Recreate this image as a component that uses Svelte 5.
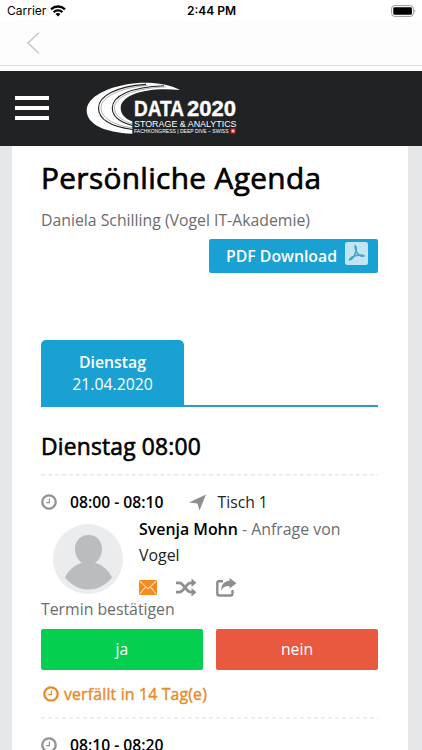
<script>
  const person = {
    name: 'Svenja Mohn',
    request: 'Anfrage von',
    company: 'Vogel'
  };

  const day = { name: 'Dienstag', date: '21.04.2020' };

  let answer = $state(null);
</script>

{#snippet clock()}
  <svg class="clock" viewBox="0 0 16 16">
    <circle cx="8" cy="8" r="6.7" fill="none" stroke="currentColor" stroke-width="2.3" />
    <path d="M8.4 4.4V8.6H5.2" fill="none" stroke="currentColor" stroke-width="1.2" />
  </svg>
{/snippet}

<div class="screen">
  <div class="status">
    <div class="carrier">
      <span>Carrier</span>
      <svg width="16" height="12" viewBox="0 0 16 12">
        <g fill="none" stroke="#000" stroke-width="2.3">
          <path d="M1 4.3A10.2 10.2 0 0 1 15 4.3" />
          <path d="M3.6 7.2A6.3 6.3 0 0 1 12.4 7.2" />
        </g>
        <path d="M8 11.6L5.5 9.1A3.6 3.6 0 0 1 10.5 9.1Z" />
      </svg>
    </div>
    <div class="time">2:44 PM</div>
    <div class="power">
      <svg width="25" height="12" viewBox="0 0 25 12">
        <rect x="0.6" y="0.6" width="21.8" height="10.8" rx="3" fill="#fff" stroke="#999" />
        <rect x="2.3" y="2.2" width="18.6" height="7.6" rx="1.3" />
        <path d="M23.6 4.2Q25.2 6 23.6 7.8Z" fill="#888" />
      </svg>
    </div>
  </div>

  <nav>
    <svg width="14" height="24" viewBox="0 0 14 24">
      <path d="M13 1.500L2 12L13 22.500" fill="none" stroke="#c8c8c8" stroke-width="1.5" />
    </svg>
  </nav>

  <header>
    <button class="burger" aria-label="Menu">
      <i></i><i></i><i></i>
    </button>
    <svg class="logo" width="152" height="54" viewBox="0 0 152 54">
      <path
        fill="#fff"
        d="M94 8C80 0.500 58 -0.800 40 2.500C16 7 0.700 17 0.700 28.500C0.700 42 18 50.500 46.300 51.700V39.500C38.500 36.500 34.700 31.500 34.700 26C34.700 13 60 4.500 94 8Z"
      />
      <g fill="none" stroke="#202224" stroke-width="1.1">
        <path d="M60 2.400C30 4.500 12.500 14 12.500 26C12.500 37 25 44.500 46.500 47.500" />
        <path d="M78 3.800C45 5 26.300 14 26.300 26C26.300 34 33 40 46.500 43.500" />
      </g>
      <g fill="none" stroke="#202224" stroke-width="0.5" opacity="0.7">
        <path d="M62 3.400C34 5.500 15 15 15 26C15 35.500 27 43 46.500 46" />
        <path d="M80 4.800C48 6 28.500 15 28.500 26C28.500 33 35 38.500 46.500 42" />
      </g>
      <g fill="#fff" font-family="'Liberation Sans', Arial, sans-serif">
        <g font-size="21.5" font-weight="700" stroke="#fff" stroke-width="0.4">
          <text x="48" y="34" textLength="50" lengthAdjust="spacingAndGlyphs">DATA</text>
          <text x="101" y="34" textLength="49" lengthAdjust="spacingAndGlyphs">2020</text>
        </g>
        <text x="48" y="44.500" font-size="8.300" textLength="102.500" lengthAdjust="spacingAndGlyphs">STORAGE &amp; ANALYTICS</text>
        <text x="48" y="51" font-size="5" textLength="94.500" lengthAdjust="spacingAndGlyphs">FACHKONGRESS | DEEP DIVE – SWISS</text>
      </g>
      <rect x="144.500" y="46.500" width="5" height="5" fill="#d8232e" />
      <path d="M147 47.500v3M145.500 49h3" stroke="#fff" stroke-width="1" />
    </svg>
  </header>

  <main>
    <h1>Persönliche Agenda</h1>
    <p class="owner">Daniela Schilling (Vogel IT-Akademie)</p>

    <button class="pdf">
      <span>PDF Download</span>
      <svg width="23" height="23" viewBox="0 0 23 23">
        <rect width="23" height="23" rx="2.5" fill="#c3e5f3" />
        <path
          d="M10.200 4C11.500 5 11.300 8.500 10.200 11.500C9 15 6.500 17.500 4.600 17.800C5.200 15.500 9 14 12 13.500C15 13 18 12.800 19 13.800C17 15.200 14 13.200 12.400 11.200C10.800 9 10 6 10.200 4Z"
          fill="none" stroke="#3fa6ca" stroke-width="1.6"
        />
      </svg>
    </button>

    <div class="tabs">
      <div class="tab">
        <b>{day.name}</b>
        <span>{day.date}</span>
      </div>
    </div>

    <h2>{day.name} 08:00</h2>

    <section>
      <div class="slot">
        {@render clock()}
        <b>08:00 - 08:10</b>
        <svg class="arrow" width="17" height="17" viewBox="0 0 17 17">
          <path d="M17 0.500L10.500 16.500L8.500 9.500L0 8.500Z" fill="#8c8e90" />
        </svg>
        <span class="place">Tisch 1</span>
      </div>

      <div class="person">
        <svg class="avatar" width="70" height="70" viewBox="0 0 70 70">
          <circle cx="35" cy="35" r="35" fill="#ebecee" />
          <path
            d="M35.5 11C43.5 11 49 17 49 25C49 31 46 36 42 39C49 40.5 55.5 46 59 53.5C53 61 45 65.5 35.500 65.500C26 65.500 18 61 12 53.500C15.500 46 22 40.500 29 39C25 36 22 31 22 25C22 17 27.500 11 35.500 11Z"
            fill="#bbbcbe"
          />
        </svg>
        <div class="info">
          <div class="line"><b>{person.name}</b> - {person.request}</div>
          <div class="line dark">{person.company}</div>
          <div class="actions">
            <svg width="18" height="15" viewBox="0 0 18 15">
              <rect width="18" height="15" rx="1.2" fill="#f78a1d" />
              <path d="M0.8 1.2L9 8.8L17.200 1.200M0.800 14L6.600 7M17.200 14L11.400 7" fill="none" stroke="#ffe3c4" stroke-width="1.1" />
            </svg>
            <svg width="21" height="19" viewBox="0 0 21 19">
              <g fill="none" stroke="#8c8e90" stroke-width="2.8">
                <path d="M0 4.800H3C8.500 4.800 9.500 14.200 15 14.200H16" />
                <path d="M0 14.200H3C8.500 14.200 9.500 4.800 15 4.800H16" />
              </g>
              <path d="M15.500 0.500L20.500 4.800L15.500 9ZM15.500 10L20.500 14.200L15.500 18.500Z" fill="#8c8e90" />
            </svg>
            <svg width="21" height="19" viewBox="0 0 21 19">
              <path d="M7 3.200H3Q1.300 3.200 1.300 5V15.500Q1.300 17.500 3.200 17.500H14.500Q16.500 17.500 16.500 15.500V12" fill="none" stroke="#8c8e90" stroke-width="2.400" />
              <path d="M13.500 0L20.500 5.300L13.500 10.600V7.900C9.500 7.700 7 9 5.200 12.300C5.200 6.800 8 3.200 13.500 2.800Z" fill="#8c8e90" />
            </svg>
          </div>
        </div>
      </div>

      <p class="confirm">Termin bestätigen</p>
      <div class="answers">
        <button class="yes" onclick={() => (answer = 'ja')}>ja</button>
        <button class="no" onclick={() => (answer = 'nein')}>nein</button>
      </div>
      <div class="expires">
        {@render clock()}
        <span>verfällt in 14 Tag(e)</span>
      </div>
    </section>

    <section>
      <div class="slot">
        {@render clock()}
        <b>08:10 - 08:20</b>
      </div>
    </section>
  </main>
</div>

<style>
  :global(body) {
    background: #fff;
    overflow: hidden;
  }

  .screen {
    width: 422px;
    height: 750px;
    overflow: hidden;
    display: flex;
    flex-direction: column;
    background: #e6e7e9;
    font-family: 'Open Sans', sans-serif;
    font-size: 15.8px;
    color: #6c6c6e;
  }

  svg {
    display: block;
    flex: none;
  }

  button {
    border: 0;
    padding: 0;
    font: inherit;
  }

  h1, h2, p {
    margin: 0;
    font-weight: 400;
    white-space: nowrap;
  }

  .status {
    flex: none;
    display: grid;
    grid-template-columns: 1fr auto 1fr;
    align-items: center;
    height: 22px;
    padding: 0 6px 0 7px;
    background: #fff;
    color: #000;
    font: 12px/22px Inter, sans-serif;
  }

  .carrier {
    display: flex;
    align-items: center;
    gap: 5px;
  }

  .carrier span {
    margin-right: -1px;
  }

  .time {
    font-weight: 600;
  }

  .power {
    display: flex;
    justify-content: flex-end;
  }

  nav {
    flex: none;
    box-sizing: border-box;
    height: 44px;
    padding: 9px 26px;
    border-bottom: 1px solid #dcdcdc;
    background: #fdfdfd;
  }

  header {
    flex: none;
    box-sizing: border-box;
    display: flex;
    align-items: flex-start;
    gap: 37px;
    height: 80px;
    padding: 16px 15px 0;
    border-top: 5px solid #fff;
    background: #202224;
  }

  .burger {
    display: flex;
    flex-direction: column;
    gap: 6px;
    width: 34px;
    margin-top: 9px;
    background: none;
  }

  .burger i {
    width: 34px;
    height: 4px;
    background: #fff;
  }

  .logo {
    margin-top: -5px;
  }

  main {
    flex: 1;
    margin: 0 14px 0 12px;
    padding: 12px 30px 0 29px;
    background: #fff;
  }

  h1 {
    color: #000;
    font-size: 29.8px;
    line-height: 40px;
    letter-spacing: 0.35px;
    -webkit-text-stroke: 0.7px #000;
  }

  .owner {
    margin-top: 10px;
    line-height: 24px;
  }

  .pdf {
    display: flex;
    align-items: center;
    width: 169px;
    height: 34px;
    margin: 7px 0 0 auto;
    padding-left: 17px;
    gap: 8px;
    border-radius: 2px;
    background: #1aa1d4;
    color: #fff;
    font-weight: 600;
    white-space: nowrap;
  }

  .pdf svg {
    margin-top: -5px;
  }

  .tabs {
    margin-top: 67px;
    border-bottom: 2px solid #2b9dbd;
  }

  .tab {
    box-sizing: border-box;
    display: flex;
    flex-direction: column;
    align-items: center;
    width: 143px;
    height: 67px;
    margin-bottom: -2px;
    padding-top: 11px;
    border-radius: 5px 5px 0 0;
    background: #1aa1d4;
    color: #fff;
    line-height: 22px;
  }

  b {
    font-weight: 600;
  }

  h2 {
    margin-top: 24px;
    color: #000;
    font-size: 22.8px;
    line-height: 32px;
    letter-spacing: 0.2px;
    -webkit-text-stroke: 0.6px #000;
  }

  section {
    padding-top: 14px;
    background: repeating-linear-gradient(90deg, #e6e8e9 0 4px, #fff 4px 7px) top / 100% 1.5px no-repeat;
  }

  h2 + section {
    margin-top: 11px;
  }

  .slot {
    display: flex;
    align-items: center;
    height: 28px;
    color: #000;
    font-size: 15.7px;
    white-space: nowrap;
  }

  .clock {
    width: 16px;
    height: 16px;
    color: #909294;
  }

  .slot .clock {
    margin-right: 13px;
  }

  .arrow {
    margin: 0 12px 0 25px;
  }

  .place {
    color: #222;
  }

  .person {
    display: flex;
    height: 81px;
    padding-left: 12px;
    gap: 16px;
  }

  .avatar {
    margin-top: 8px;
  }

  .line {
    font-size: 15.9px;
    line-height: 26px;
    white-space: nowrap;
  }

  .line b {
    color: #000;
  }

  .dark {
    color: #222;
  }

  .actions {
    display: flex;
    align-items: center;
    gap: 19px;
    margin-top: 10px;
  }

  .confirm {
    line-height: 24px;
  }

  .answers {
    display: grid;
    grid-template-columns: 1fr 1fr;
    gap: 13px;
    margin-top: 8px;
  }

  .answers button {
    height: 41px;
    padding-bottom: 1px;
    border-radius: 2px;
    color: #fff;
  }

  .yes {
    background: #04cf4e;
  }

  .no {
    background: #e95940;
  }

  .expires {
    display: flex;
    align-items: center;
    gap: 5px;
    height: 47px;
    padding-left: 2px;
    color: #ea8a26;
    letter-spacing: 0.18px;
    -webkit-text-stroke: 0.4px #ea8a26;
  }

  .expires .clock {
    color: inherit;
  }
</style>
